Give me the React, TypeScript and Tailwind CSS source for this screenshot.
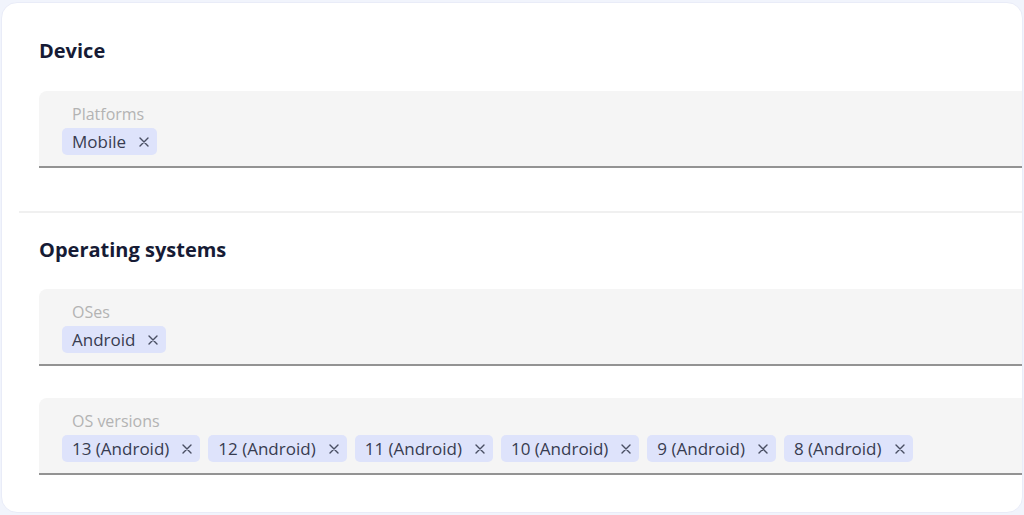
import React from "react";

const font = { fontFamily: "'Open Sans', 'Noto Sans', sans-serif" };

const CloseIcon = () => (
    <svg width="10" height="10" viewBox="0 0 10 10" className="text-[#4a4f63]">
        <path d="M1 1 L9 9 M9 1 L1 9" stroke="currentColor" strokeWidth="1.4" strokeLinecap="round" />
    </svg>
);

const Chip = ({ label }: { label: string }) => (
    <span className="inline-flex h-[27px] items-center gap-[13px] rounded-[5px] bg-[#dee3fb] pl-[10px] pr-[8px] text-[17px] text-[#383c50]">
        {label}
        <CloseIcon />
    </span>
);

const Field = (props: { label: string; values: string[] }) => (
    <div className="rounded-tl-lg border-b-2 border-[#939393] bg-[#f5f5f5] pl-[23px] pt-[13px] pb-[11px]">
        <div className="h-[20px] pl-[10px] text-[16px] leading-[20px] text-[#b3b3b3]">{props.label}</div>
        <div className="mt-[4px] flex gap-[8px]">
            {props.values.map((v) => (
                <Chip key={v} label={v} />
            ))}
        </div>
    </div>
);

const Heading = ({ children }: { children: React.ReactNode }) => (
    <h2 className="text-[20px] font-bold leading-[28px] text-[#161b35]">{children}</h2>
);

export default function App() {
    return (
        <div className="h-[515px] w-[1024px] bg-[#f1f4fc] pl-[1px] pt-[2px]" style={font}>
            <div className="h-[511px] w-[1022px] overflow-hidden rounded-2xl border border-[#e9ecf8] bg-white pl-[17px]">
                <section className="pl-[20px] pt-[34px] pb-[43px]">
                    <Heading>Device</Heading>
                    <div className="mt-[26px]">
                        <Field label="Platforms" values={["Mobile"]} />
                    </div>
                </section>

                <div className="h-[2px] bg-[#f0f0f0]" />

                <section className="pl-[20px] pt-[23px]">
                    <Heading>Operating systems</Heading>
                    <div className="mt-[25px] flex flex-col gap-[32px]">
                        <Field label="OSes" values={["Android"]} />
                        <Field
                            label="OS versions"
                            values={[
                                "13 (Android)",
                                "12 (Android)",
                                "11 (Android)",
                                "10 (Android)",
                                "9 (Android)",
                                "8 (Android)",
                            ]}
                        />
                    </div>
                </section>
            </div>
        </div>
    );
}
